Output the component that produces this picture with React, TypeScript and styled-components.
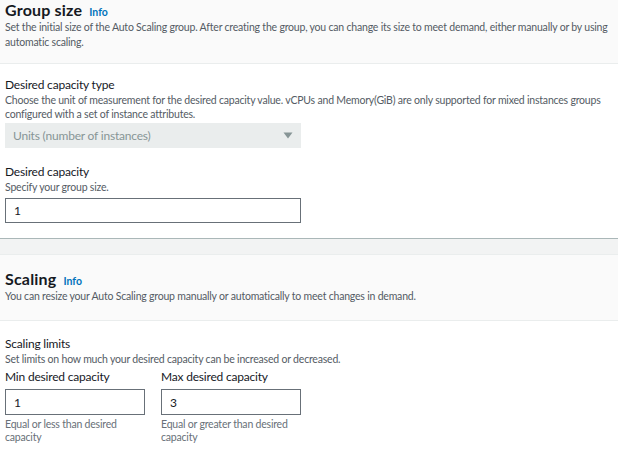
import React from "react";
import styled, { createGlobalStyle } from "styled-components";

const FONT = `Lato, "Open Sans", Arial, sans-serif`;

const Global = createGlobalStyle`
  html, body { margin: 0; padding: 0; background: #ffffff; }
  body { font-family: ${FONT}; color: #16191f; overflow: hidden; }
  * { box-sizing: border-box; }
`;

const Page = styled.div`
  width: 618px;
  display: flex;
  flex-direction: column;
`;

const Panel = styled.section`
  display: flex;
  flex-direction: column;
  background: #ffffff;
`;

const Header = styled.header<{ $top: number; $bottom: number }>`
  background: #fafafa;
  border-bottom: 1px solid #eaeded;
  padding: ${(p) => p.$top}px 5px ${(p) => p.$bottom}px 5px;
  display: flex;
  flex-direction: column;
`;

const TitleRow = styled.div`
  display: flex;
  align-items: baseline;
  gap: 7px;
  height: 20px;
`;

const Title = styled.h2`
  margin: 0;
  font-size: 16px;
  line-height: 20px;
  font-weight: 700;
  letter-spacing: 0.2px;
  color: #16191f;
`;

const Info = styled.a`
  font-size: 10.5px;
  font-weight: 700;
  color: #0073bb;
  text-decoration: none;
`;

const HeaderDesc = styled.p`
  margin: 0;
  font-size: 10.5px;
  line-height: 15px;
  letter-spacing: -0.2px;
  color: #545b64;
`;

const Body = styled.div<{ $top: number; $bottom: number }>`
  padding: ${(p) => p.$top}px 5px ${(p) => p.$bottom}px 5px;
  display: flex;
  flex-direction: column;
`;

const Field = styled.div<{ $gap?: number }>`
  display: flex;
  flex-direction: column;
  margin-top: ${(p) => p.$gap ?? 0}px;
`;

const Label = styled.label`
  font-size: 12px;
  font-weight: 400;
  line-height: 17px;
  letter-spacing: -0.2px;
  color: #16191f;
`;

const Desc = styled.div`
  font-size: 10.5px;
  line-height: 14px;
  letter-spacing: -0.2px;
  color: #545b64;
`;

const Select = styled.div`
  margin-top: 2px;
  width: 296px;
  height: 25px;
  background: #eaeded;
  display: flex;
  align-items: center;
  justify-content: space-between;
  padding: 0 8px 0 8px;
  font-size: 12px;
  letter-spacing: -0.2px;
  color: #879596;
`;

const Input = styled.input<{ $width: number; $height: number }>`
  width: ${(p) => p.$width}px;
  height: ${(p) => p.$height}px;
  border: 1px solid #687078;
  border-radius: 0;
  padding: 0 8px;
  font-family: ${FONT};
  font-size: 12px;
  color: #16191f;
  background: #ffffff;
  outline: none;
`;

const InputWrap = styled.div`
  margin-top: 4px;
  display: flex;
`;

const Separator = styled.div`
  border-top: 1px solid #aab7b8;
  height: 17px;
  background: #f2f3f3;
  border-bottom: 1px solid #eaeded;
`;

const Limits = styled.div`
  margin-top: 2px;
  display: grid;
  grid-template-columns: 140px 140px;
  column-gap: 16px;
`;

const LimitCell = styled.div`
  display: flex;
  flex-direction: column;
`;

const Help = styled.div`
  margin-top: 3px;
  font-size: 10.5px;
  line-height: 13px;
  letter-spacing: -0.2px;
  color: #687078;
`;

const Caret = () => (
  <svg width="10" height="7" viewBox="0 0 10 7" aria-hidden>
    <path d="M0.5 0.5 H9.5 L5 6.5 Z" fill="#879596" />
  </svg>
);

export default function App() {
  return (
    <Page>
      <Global />
      <Panel>
        <Header $top={0} $bottom={13}>
          <TitleRow>
            <Title>Group size</Title>
            <Info href="#">Info</Info>
          </TitleRow>
          <HeaderDesc>
            Set the initial size of the Auto Scaling group. After creating the group, you can change its size to meet
            demand, either manually or by using automatic scaling.
          </HeaderDesc>
        </Header>
        <Body $top={12} $bottom={15}>
          <Field>
            <Label>Desired capacity type</Label>
            <Desc>
              Choose the unit of measurement for the desired capacity value. vCPUs and Memory(GiB) are only supported
              for mixed instances groups configured with a set of instance attributes.
            </Desc>
            <Select>
              <span>Units (number of instances)</span>
              <Caret />
            </Select>
          </Field>
          <Field $gap={15}>
            <Label>Desired capacity</Label>
            <Desc>Specify your group size.</Desc>
            <InputWrap>
              <Input $width={296} $height={25} defaultValue="1" />
            </InputWrap>
          </Field>
        </Body>
      </Panel>
      <Separator />
      <Panel>
        <Header $top={14} $bottom={16}>
          <TitleRow>
            <Title>Scaling</Title>
            <Info href="#">Info</Info>
          </TitleRow>
          <HeaderDesc>You can resize your Auto Scaling group manually or automatically to meet changes in demand.</HeaderDesc>
        </Header>
        <Body $top={14} $bottom={10}>
          <Field>
            <Label>Scaling limits</Label>
            <Desc>Set limits on how much your desired capacity can be increased or decreased.</Desc>
            <Limits>
              <LimitCell>
                <Label>Min desired capacity</Label>
                <InputWrap>
                  <Input $width={140} $height={26} defaultValue="1" />
                </InputWrap>
                <Help>Equal or less than desired capacity</Help>
              </LimitCell>
              <LimitCell>
                <Label>Max desired capacity</Label>
                <InputWrap>
                  <Input $width={140} $height={26} defaultValue="3" />
                </InputWrap>
                <Help>Equal or greater than desired capacity</Help>
              </LimitCell>
            </Limits>
          </Field>
        </Body>
      </Panel>
    </Page>
  );
}
